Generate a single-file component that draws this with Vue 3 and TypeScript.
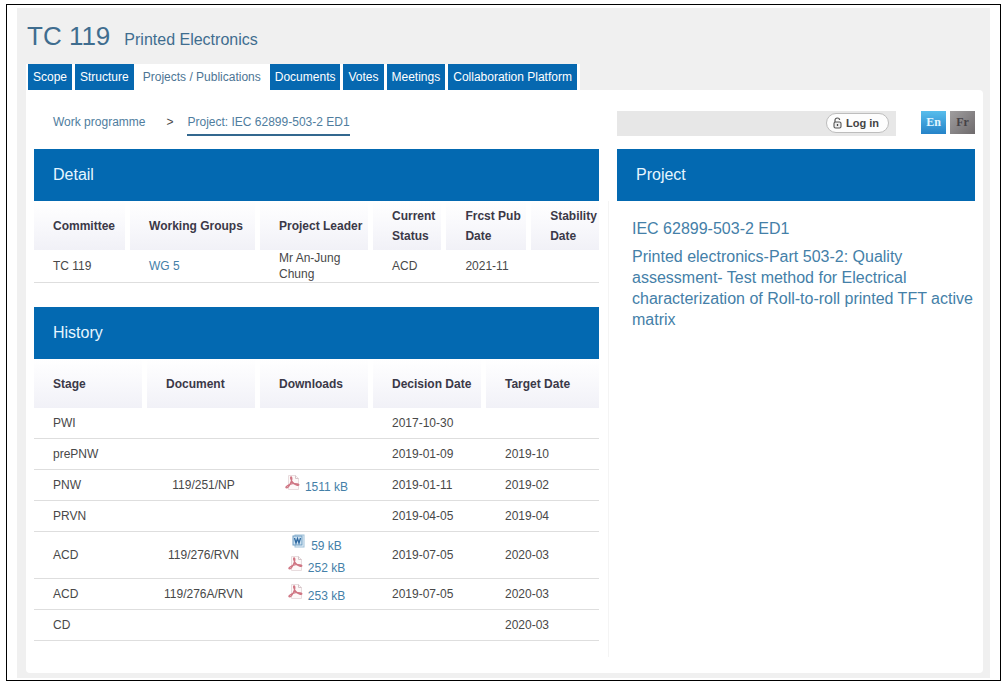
<script setup lang="ts">
import { ref } from 'vue'

interface Download {
  kind: 'pdf' | 'word'
  size: string
}

interface HistoryRow {
  stage: string
  document?: string
  downloads?: Download[]
  decision?: string
  target?: string
}

const tabs: string[] = [
  'Scope',
  'Structure',
  'Projects / Publications',
  'Documents',
  'Votes',
  'Meetings',
  'Collaboration Platform',
]
const activeTab = ref('Projects / Publications')

const history: HistoryRow[] = [
  { stage: 'PWI', decision: '2017-10-30' },
  { stage: 'prePNW', decision: '2019-01-09', target: '2019-10' },
  {
    stage: 'PNW',
    document: '119/251/NP',
    downloads: [{ kind: 'pdf', size: '1511 kB' }],
    decision: '2019-01-11',
    target: '2019-02',
  },
  { stage: 'PRVN', decision: '2019-04-05', target: '2019-04' },
  {
    stage: 'ACD',
    document: '119/276/RVN',
    downloads: [
      { kind: 'word', size: '59 kB' },
      { kind: 'pdf', size: '252 kB' },
    ],
    decision: '2019-07-05',
    target: '2020-03',
  },
  {
    stage: 'ACD',
    document: '119/276A/RVN',
    downloads: [{ kind: 'pdf', size: '253 kB' }],
    decision: '2019-07-05',
    target: '2020-03',
  },
  { stage: 'CD', target: '2020-03' },
]
</script>

<template>
  <div class="frame">
    <div class="page">
      <header class="title">
        <h1>TC 119</h1>
        <p>Printed Electronics</p>
      </header>

      <nav class="tabs">
        <a
          v-for="tab in tabs"
          :key="tab"
          href="#"
          :class="{ active: tab === activeTab }"
          @click.prevent="activeTab = tab"
          >{{ tab }}</a
        >
      </nav>

      <main class="panel">
        <div class="columns tools">
          <div class="crumbs">
            <a href="#">Work programme</a>
            <span>&gt;</span>
            <a href="#" class="current">Project: IEC 62899-503-2 ED1</a>
          </div>
          <div class="account">
            <div class="login-bar">
              <button type="button" class="login">
                <svg width="9" height="12" viewBox="0 0 9 12" aria-hidden="true">
                  <path d="M2 5V3.2C2 1.8 3 1 4.3 1S6.6 1.8 6.6 3" fill="none" stroke="#555" stroke-width="1.2" />
                  <rect x="1" y="5" width="7" height="6" rx="1.5" fill="#eee" stroke="#555" stroke-width="1.1" />
                  <path d="M4.5 7v2" stroke="#444" stroke-width="1.3" />
                </svg>
                Log in
              </button>
            </div>
            <div class="langs">
              <button type="button" class="en">En</button>
              <button type="button" class="fr">Fr</button>
            </div>
          </div>
        </div>

        <div class="columns body">
          <div class="left">
            <section>
              <h2>Detail</h2>
              <table class="detail">
                <colgroup>
                  <col class="d1" /><col class="d2" /><col class="d3" />
                  <col class="d4" /><col class="d5" /><col class="d6" />
                </colgroup>
                <thead>
                  <tr>
                    <th>Committee</th>
                    <th>Working Groups</th>
                    <th>Project Leader</th>
                    <th>Current Status</th>
                    <th>Frcst Pub Date</th>
                    <th>Stability Date</th>
                  </tr>
                </thead>
                <tbody>
                  <tr>
                    <td>TC 119</td>
                    <td><a href="#">WG 5</a></td>
                    <td class="leader">Mr An-Jung Chung</td>
                    <td>ACD</td>
                    <td>2021-11</td>
                    <td></td>
                  </tr>
                </tbody>
              </table>
            </section>

            <section>
              <h2>History</h2>
              <table>
                <thead>
                  <tr>
                    <th>Stage</th>
                    <th>Document</th>
                    <th>Downloads</th>
                    <th>Decision Date</th>
                    <th>Target Date</th>
                  </tr>
                </thead>
                <tbody>
                  <tr v-for="(row, i) in history" :key="i">
                    <td>{{ row.stage }}</td>
                    <td class="center">{{ row.document }}</td>
                    <td class="center">
                      <a v-for="file in row.downloads" :key="file.size" href="#" class="file">
                        <svg v-if="file.kind === 'pdf'" width="15" height="15" viewBox="0 0 15 15" aria-hidden="true">
                          <path d="M3.5.5h7l3 3v11h-10z" fill="#fdf8f8" stroke="#e8dcde" />
                          <path d="M10.5.5v3h3" fill="none" stroke="#d5c5c8" />
                          <path
                            d="M6 2c1.4 0 .8 3.5-.5 6.2C4.3 10.700 2.500 13.300 1.200 12.700 0 12 3.500 9.300 7.500 8.700c3.500-.5 6.800.3 6.300 1.300-.6 1-4.200-.5-6-2.500C6.200 5.700 5 2.200 6 2z"
                            fill="none"
                            stroke="#cf7583"
                            stroke-width="1.3"
                          />
                        </svg>
                        <svg v-else width="15" height="15" viewBox="0 0 15 15" aria-hidden="true">
                          <rect x="4" y="1" width="9" height="12" fill="#eef6fb" stroke="#9dbfd8" />
                          <rect x="2" y="2" width="9" height="9" fill="#cfe3f2" stroke="#6d9cc2" />
                          <path d="M3.5 4l1.500 5 1.500-4.500L8 9l1.500-5" fill="none" stroke="#2d68a0" stroke-width="1.3" />
                        </svg>
                        <span>{{ file.size }}</span>
                      </a>
                    </td>
                    <td>{{ row.decision }}</td>
                    <td>{{ row.target }}</td>
                  </tr>
                </tbody>
              </table>
            </section>
          </div>

          <aside class="right">
            <h2>Project</h2>
            <div class="project">
              <a href="#">IEC 62899-503-2 ED1</a>
              <p>
                Printed electronics-Part 503-2: Quality assessment- Test method for Electrical characterization of
                Roll-to-roll printed TFT active matrix
              </p>
            </div>
          </aside>
        </div>
      </main>
    </div>
  </div>
</template>

<style>
body {
  margin: 0;
  background: #fff;
}
</style>

<style scoped>
.frame {
  box-sizing: border-box;
  margin: 4px 6px 0;
  padding: 3px 10px 2px;
  border: 1px solid #000;
  font-family: 'Liberation Sans', Arial, sans-serif;
  font-size: 12px;
  line-height: 16px;
  color: #484848;
}
.page {
  padding: 0 7px 5px 9px;
  background: #f0f0f0;
}
.frame a {
  color: #4480a8;
  text-decoration: none;
}
h1,
h2,
p {
  margin: 0;
  font-weight: 400;
}
.title {
  display: flex;
  align-items: baseline;
  gap: 14px;
  padding: 12px 0 12px 1px;
  color: #3f6d8f;
}
h1 {
  font-size: 26px;
  line-height: 32px;
}
.title p {
  font-size: 16px;
}
.tabs {
  display: flex;
  gap: 3px;
  width: fit-content;
  padding: 0 3px 0 2px;
  background: #fff;
}
.frame .tabs a {
  padding: 0 5px;
  background: #0668b0;
  color: #fff;
  line-height: 26px;
}
.frame .tabs .active {
  padding: 0 6px;
  background: #fff;
  color: #4d7594;
}
.panel {
  padding: 21px 8px 32px;
  border-radius: 0 4px 4px 4px;
  background: #fff;
}
.columns {
  display: grid;
  grid-template-columns: 565fr 358fr;
  gap: 18px;
}
.tools {
  margin-bottom: 13px;
}
.crumbs {
  display: flex;
  gap: 14px;
  padding: 3px 0 0 19px;
}
.crumbs span {
  margin-left: 7px;
}
.crumbs .current {
  border-bottom: 2px solid #33688f;
  padding-bottom: 4px;
}
.crumbs a {
  color: #4f7d9e;
}
.account {
  display: flex;
  gap: 25px;
  align-items: flex-start;
}
.login-bar {
  flex: 1;
  display: flex;
  justify-content: flex-end;
  padding: 2px 7px 3px;
  background: #e7e7e7;
}
.login {
  display: flex;
  align-items: center;
  gap: 4px;
  height: 20px;
  padding: 0 9px 0 6px;
  border: 1px solid #bdbdbd;
  border-radius: 10px;
  background: #fdfdfd;
  color: #444;
  font: bold 11px 'Liberation Sans', Arial, sans-serif;
}
.langs {
  display: flex;
  gap: 4px;
}
.langs button {
  width: 25px;
  height: 23px;
  padding: 0;
  border: 0;
  font: bold 12px 'Liberation Serif', 'Times New Roman', serif;
}
.langs .en {
  background: linear-gradient(#58bdec, #2583c8);
  color: #e4f6ff;
}
.langs .fr {
  background: linear-gradient(135deg, #a09e9f, #6e6a6c);
  color: #454247;
}
h2 {
  padding: 0 19px;
  background: #0369b1;
  color: #e6f6ff;
  font-size: 16px;
  line-height: 52px;
}
.left {
  position: relative;
  display: flex;
  flex-direction: column;
  gap: 24px;
}
.left::after {
  content: '';
  position: absolute;
  top: 52px;
  bottom: -16px;
  right: -10px;
  width: 1px;
  background: #f4f4f4;
}
table {
  width: 100%;
  table-layout: fixed;
  border-collapse: separate;
  border-spacing: 0;
}
th {
  box-sizing: border-box;
  height: 49px;
  padding: 0 0 0 19px;
  border-right: 5px solid #fff;
  background: linear-gradient(#fff, #f9f9fc 45%, #f1f1f7);
  background-clip: padding-box;
  color: #3b3948;
  line-height: 20px;
  text-align: left;
}
th:last-child {
  border-right: 0;
}
td {
  box-sizing: border-box;
  height: 31px;
  padding: 0 0 0 19px;
  border-bottom: 1px solid #dedede;
}
.leader {
  padding-right: 20px;
}
.center {
  padding: 1px 0;
  text-align: center;
}
.file {
  display: flex;
  justify-content: center;
  align-items: flex-end;
  gap: 5px;
  height: 20px;
  padding: 1px 0;
}
.file svg {
  align-self: flex-start;
}
.d1 {
  width: 17%;
}
.d2 {
  width: 23%;
}
.d3 {
  width: 20%;
}
.d4 {
  width: 13%;
}
.d5 {
  width: 15%;
}
.d6 {
  width: 12%;
}
.project {
  padding: 17px 0 0 15px;
  font-size: 16px;
  line-height: 21px;
  color: #4480a8;
}
.project p {
  margin-top: 7px;
}
</style>
